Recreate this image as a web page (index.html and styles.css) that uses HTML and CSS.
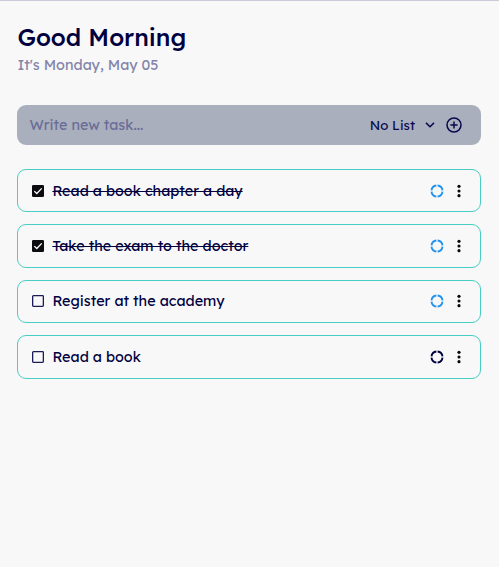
FILE: index.html
```html
<!DOCTYPE html>
<html lang="en">
<head>
<meta charset="utf-8">
<title>Tasks</title>
<link rel="stylesheet" href="styles.css">
</head>
<body>
<svg class="defs" width="0" height="0" aria-hidden="true">
  <symbol id="ring" viewBox="0 0 14 14"><path d="M7.6 1.5A5.5 5.5 0 0 1 12.5 6.4M12.5 7.6A5.5 5.5 0 0 1 7.6 12.5M6.4 12.5A5.5 5.5 0 0 1 1.5 7.6M1.5 6.4A5.5 5.5 0 0 1 6.4 1.5" fill="none" stroke="currentColor" stroke-width="1.9"/></symbol>
  <symbol id="dots" viewBox="0 0 16 16"><circle cx="8" cy="2.7" r="1.8"/><circle cx="8" cy="8" r="1.8"/><circle cx="8" cy="13.3" r="1.8"/></symbol>
  <symbol id="checked" viewBox="0 0 12 12"><rect width="12" height="12" rx="1.3" fill="#0b0b10"/><path d="M2.3 6.1 4.8 8.5 9.7 3.4" fill="none" stroke="#fff" stroke-width="1.3"/></symbol>
  <symbol id="empty" viewBox="0 0 12 12"><rect x=".65" y=".65" width="10.7" height="10.7" rx=".8" fill="none" stroke="#1b1b55" stroke-width="1.3"/></symbol>
</svg>
<main class="page">
  <header class="header">
    <h1 class="title">Good Morning</h1>
    <p class="date">It's Monday, May 05</p>
  </header>
  <div class="composer">
    <span class="placeholder">Write new task...</span>
    <span class="list-name">No List</span>
    <svg class="chevron" viewBox="0 0 10 6"><path d="M1 .9 5 4.8 9 .9"/></svg>
    <svg class="add" viewBox="0 0 16 16"><circle cx="8" cy="8" r="7"/><path d="M8 4.4v7.2M4.4 8h7.2"/></svg>
  </div>
  <ul class="tasks">
    <li class="task done"><svg class="box"><use href="#checked"/></svg><span class="name">Read a book chapter a day</span><svg class="ring blue"><use href="#ring"/></svg><svg class="dots"><use href="#dots"/></svg></li>
    <li class="task done"><svg class="box"><use href="#checked"/></svg><span class="name">Take the exam to the doctor</span><svg class="ring blue"><use href="#ring"/></svg><svg class="dots"><use href="#dots"/></svg></li>
    <li class="task"><svg class="box"><use href="#empty"/></svg><span class="name">Register at the academy</span><svg class="ring blue"><use href="#ring"/></svg><svg class="dots"><use href="#dots"/></svg></li>
    <li class="task"><svg class="box"><use href="#empty"/></svg><span class="name">Read a book</span><svg class="ring"><use href="#ring"/></svg><svg class="dots"><use href="#dots"/></svg></li>
  </ul>
</main>
</body>
</html>
```

FILE: styles.css
```css
* { box-sizing: border-box; }
body {
  margin: 0;
  min-height: 567px;
  background: #f8f8f8;
  border-top: 1px solid #c9cbdb;
  color: #00003f;
  font-family: Lexend, Inter, "Liberation Sans", sans-serif;
  font-weight: 400;
  overflow: hidden;
}
.defs { display: block; height: 0; }
.page { padding: 20px 18px 0 17.4px; }
.header { height: 84.4px; white-space: nowrap; }
.title { margin: 0; font-size: 24px; line-height: 32px; font-weight: 500; }
.date { margin: 2px 0 0; font-size: 14.4px; line-height: 20px; color: #8284aa; }
.composer {
  display: flex;
  align-items: center;
  height: 40px;
  padding: 0 19px 0 12px;
  border-radius: 9px;
  background: #a9afbc;
}
.placeholder { flex: 1; font-size: 14.4px; line-height: 20px; color: #6b6d98; }
.list-name { font-size: 13.2px; color: #08084e; }
.chevron { width: 10px; height: 6px; margin: 0 11px 0 10px; fill: none; stroke: #08084e; stroke-width: 1.5; }
.add { width: 16px; height: 16px; fill: none; stroke: #08084e; stroke-width: 1.5; }
.tasks { display: grid; gap: 12px; margin: 23.6px 0 0; padding: 0; list-style: none; }
.task {
  display: flex;
  align-items: center;
  height: 43.4px;
  padding: 0 13px 0 14px;
  border: 1px solid #48cec4;
  border-radius: 9px;
}
.box { width: 12px; height: 12px; margin-right: 8px; }
.name { margin-right: auto; font-size: 14.4px; line-height: 20px; white-space: nowrap; }
.done .name { text-decoration: line-through; text-decoration-thickness: 1px; }
.ring { width: 14px; height: 14px; margin-right: 7.5px; }
.blue { color: #2394ee; }
.dots { width: 16px; height: 14px; fill: #08080c; }
```
